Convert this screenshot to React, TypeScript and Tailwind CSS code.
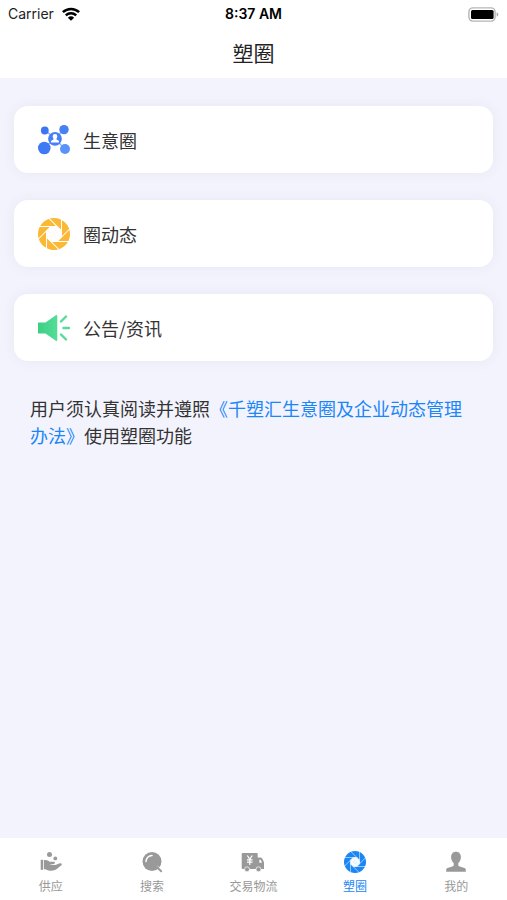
import React from 'react';

import { clsx } from 'clsx';

interface IconProps {
  className?: string;
}

interface ApertureProps extends IconProps {
  hole: number;
  stroke: number;
}

const BLADE_ANGLES = [0, 45, 90, 135, 180, 225, 270, 315];

const WifiIcon: React.FC<IconProps> = ({ className }) => (
  <svg viewBox="0 0 18 14" className={className} aria-hidden="true">
    <g fill="none" stroke="#000" strokeWidth="2.5">
      <path d="M0.9 5.2a11.6 11.6 0 0 1 16.2 0" />
      <path d="M3.8 8.4a7.4 7.4 0 0 1 10.4 0" />
    </g>
    <path d="M9 13.7 5.9 10.8a4.5 4.5 0 0 1 6.2 0z" />
  </svg>
);

const BatteryIcon: React.FC<IconProps> = ({ className }) => (
  <svg viewBox="0 0 31 15" className={className} aria-hidden="true">
    <rect x="0.9" y="0.9" width="26.2" height="13.2" rx="4" fill="#fff" stroke="#b5b5b5" strokeWidth="1.4" />
    <rect x="3" y="3" width="22.6" height="9" rx="1.5" />
    <path d="M28.7 5.3c2.2 1 2.2 3.4 0 4.4z" fill="#a5a5a5" />
  </svg>
);

const CircleIcon: React.FC<IconProps> = ({ className }) => (
  <svg viewBox="0 0 32 32" className={className} aria-hidden="true">
    <path d="M7 6 17 15 26 5M6 24 17 15 27 25" fill="none" stroke="#8fb1f9" strokeWidth="1.3" />
    <circle cx="6.8" cy="6.5" r="3.9" fill="#3c74f3" />
    <circle cx="26" cy="5.6" r="4.7" fill="#477ff5" />
    <circle cx="6.3" cy="24" r="6.3" fill="#3f79f4" />
    <circle cx="27" cy="25" r="5" fill="#5b92fa" />
    <circle cx="17" cy="14.8" r="6.9" fill="#4780f6" />
    <path
      d="M17 10a2.300 2.300 0 0 1 2.300 2.400c0 1-.4 1.700-.8 2.200v1l1.800.8c.5.200.7.500.7 1v1h-8v-1c0-.5.200-.8.700-1l1.800-.8v-1c-.4-.5-.8-1.200-.8-2.200A2.300 2.300 0 0 1 17 10z"
      fill="#fff"
    />
  </svg>
);

const ApertureIcon: React.FC<ApertureProps> = ({ className, hole, stroke }) => (
  <svg viewBox="-16 -16 32 32" className={className} aria-hidden="true">
    <circle r="16" fill="currentColor" />
    {BLADE_ANGLES.map((angle) => (
      <g key={angle} transform={`rotate(${angle})`}>
        <path d={`M0 0 ${-hole * 0.414} ${-hole}H${hole * 0.414}z`} fill="#fff" stroke="#fff" strokeWidth="0.5" />
        <path d={`M${hole * 0.414} ${-hole}H-16`} stroke="#fff" strokeWidth={stroke} />
      </g>
    ))}
  </svg>
);

const SpeakerIcon: React.FC<IconProps> = ({ className }) => (
  <svg viewBox="0 0 32 28" className={className} aria-hidden="true">
    <defs>
      <linearGradient id="speaker" x1="0" y1="0" x2="1" y2="0">
        <stop offset="0" stopColor="#3bcf83" />
        <stop offset="1" stopColor="#55dd98" />
      </linearGradient>
    </defs>
    <path
      d="M1 8.5h6.500L17.800 1.200c.8-.5 1.500-.1 1.500.8v24c0 .9-.7 1.300-1.500.8L7.500 19.500H1c-.6 0-1-.4-1-1v-9c0-.6.400-1 1-1z"
      fill="url(#speaker)"
    />
    <path
      d="M23 7.500 28 2.500M25.500 14h5.500M23 20.500l5 5"
      fill="none"
      stroke="#55dd98"
      strokeWidth="2.4"
      strokeLinecap="round"
    />
  </svg>
);

const SupplyIcon: React.FC<IconProps> = ({ className }) => (
  <svg viewBox="0 0 24 24" className={className} fill="currentColor" aria-hidden="true">
    <circle cx="10.5" cy="4.6" r="2.5" />
    <circle cx="16.3" cy="8.4" r="1.9" />
    <path d="M1.700 9.800h2.400v10H1.700z" />
    <path d="M4.900 10.300c2.400-.9 4 .1 5.700 1.500h4.200c1.500 0 1.600 2 .1 2.200l-3.600.3v.5l5 .1 4.700-1.600c1.500-.5 2.600.9 1.300 2l-4.500 3.800c-2.700 2.100-7.700 2-10.100.6-.8-.4-1.700-.5-2.800-.5z" />
  </svg>
);

const SearchIcon: React.FC<IconProps> = ({ className }) => (
  <svg viewBox="0 0 24 24" className={className} aria-hidden="true">
    <circle cx="12" cy="11.500" r="9.500" fill="currentColor" />
    <path d="M6 11.500a6 6 0 0 1 6-6" fill="none" stroke="#fff" strokeWidth="1.5" strokeLinecap="round" />
    <path d="m17.300 15.800 4 4" stroke="#fff" strokeWidth="0.8" />
    <path d="m16.200 16.500 5 4.800" stroke="currentColor" strokeWidth="1.9" strokeLinecap="round" />
  </svg>
);

const TruckIcon: React.FC<IconProps> = ({ className }) => (
  <svg viewBox="0 0 24 24" className={className} aria-hidden="true">
    <path
      d="M1.500 3h14.200c.6 0 1 .4 1 1v3.500h2.800c.8 0 1.300.3 1.700 1l1.600 3.300c.1.300.2.600.2 1V19H2c-.8 0-1.300-.5-1.300-1.300V4c0-.6.300-1 .8-1z"
      fill="currentColor"
    />
    <path d="M18.400 9.700h1.300l1.300 3.100h-2.600z" fill="#fff" />
    <path d="m6.300 5.500 2.500 3.700 2.500-3.700M6 9.800h5.600M6 12.200h5.600M8.800 9.200V15" fill="none" stroke="#fff" strokeWidth="1.2" />
    <g fill="currentColor" stroke="#fff" strokeWidth="0.7">
      <circle cx="6" cy="19.300" r="2.500" />
      <circle cx="17.500" cy="19.300" r="2.500" />
    </g>
  </svg>
);

const UserIcon: React.FC<IconProps> = ({ className }) => (
  <svg viewBox="0 0 24 24" className={className} fill="currentColor" aria-hidden="true">
    <path d="M12 1.700c3 0 4.900 2.200 4.900 5.300 0 2.600-1 4.700-2.600 6v2.200c0 .5.300.8.700 1l5.500 1.800c.8.300 1.300.9 1.300 1.700v2H2.200v-2c0-.8.500-1.400 1.300-1.700L9 16.200c.4-.2.700-.5.700-1V13c-1.600-1.300-2.600-3.400-2.600-6 0-3.100 1.900-5.300 4.900-5.300z" />
  </svg>
);

const ENTRIES = [
  { label: '生意圈', icon: <CircleIcon className="size-8" /> },
  {
    label: '圈动态',
    icon: <ApertureIcon className="size-8 text-[#fbb834]" hole={7.5} stroke={1} />,
  },
  { label: '公告/资讯', icon: <SpeakerIcon className="h-7 w-8" /> },
];

const TABS = [
  { label: '供应', icon: <SupplyIcon className="size-6" /> },
  { label: '搜索', icon: <SearchIcon className="size-6" /> },
  { label: '交易物流', icon: <TruckIcon className="size-6" /> },
  {
    label: '塑圈',
    icon: <ApertureIcon className="size-6 p-px" hole={6.5} stroke={0.8} />,
    active: true,
  },
  { label: '我的', icon: <UserIcon className="size-6" /> },
];

const StatusBar = () => (
  <div className="grid h-7 grid-cols-3 items-center px-2 font-[Inter,sans-serif] text-sm text-black">
    <div className="flex items-center gap-2">
      <span className="text-[#222222]">Carrier</span>
      <WifiIcon className="h-3.5 w-[18px]" />
    </div>
    <span className="text-center font-semibold">8:37 AM</span>
    <BatteryIcon className="h-[15px] w-[31px] justify-self-end" />
  </div>
);

const TabBar = () => (
  <nav className="grid h-[62px] grid-cols-5 bg-white">
    {TABS.map((tab) => (
      <a
        key={tab.label}
        href="#"
        aria-current={tab.active ? 'page' : undefined}
        className={clsx(
          'flex flex-col items-center gap-1 pt-3 text-xs',
          tab.active ? 'text-[#1b86f5]' : 'text-[#999999]'
        )}
      >
        {tab.icon}
        <span>{tab.label}</span>
      </a>
    ))}
  </nav>
);

const App: React.FC = () => {
  return (
    <div className="flex min-h-screen flex-col bg-[#f3f3fe] font-['Noto_Sans_CJK_SC',sans-serif] text-[#333333]">
      <header className="bg-white">
        <StatusBar />
        <h1 className="flex h-[50px] items-center justify-center text-[21px] text-[#222222]">
          塑圈
        </h1>
      </header>
      <main className="flex-1 px-3.5 pt-7">
        <div className="flex flex-col gap-[27px]">
          {ENTRIES.map((entry) => (
            <a
              key={entry.label}
              href="#"
              className="flex h-[67px] items-center gap-[13px] rounded-[14px] bg-white px-6 text-lg shadow-[0_0_14px_rgba(60,60,90,0.06)]"
            >
              {entry.icon}
              <span>{entry.label}</span>
            </a>
          ))}
        </div>
        <p className="mt-[34px] px-4 text-lg leading-[27px]">
          用户须认真阅读并遵照
          <a href="#" className="text-[#1b86f5]">
            《千塑汇生意圈及企业动态管理办法》
          </a>
          使用塑圈功能
        </p>
      </main>
      <TabBar />
    </div>
  );
};

export default App;
